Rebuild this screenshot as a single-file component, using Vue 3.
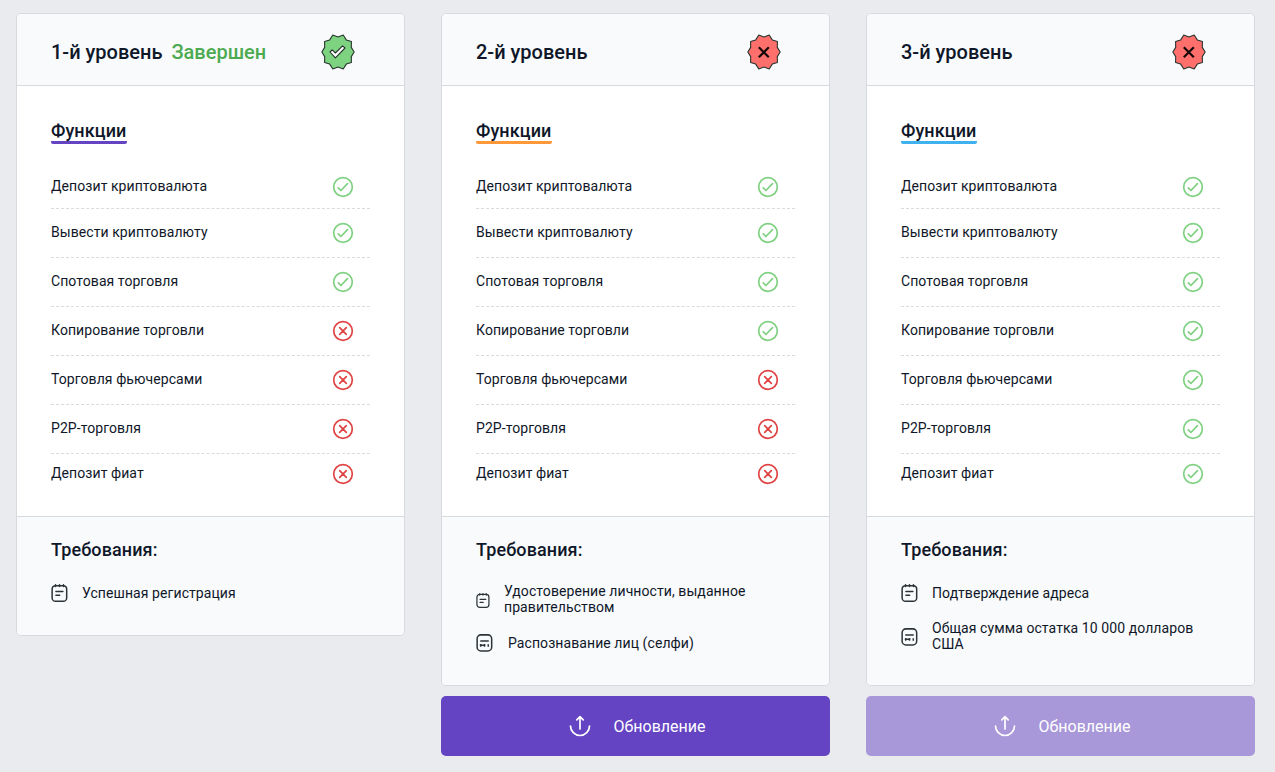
<template>
  <div class="levels">
    <div v-for="level in levels" :key="level.title" class="level">
      <div class="card">
        <div class="card-header">
          <h2 class="card-title">
            {{ level.title }}
            <span v-if="level.completed" class="card-status">Завершен</span>
          </h2>
          <svg
              class="badge"
              :class="level.completed ? 'badge-ok' : 'badge-error'"
              width="36"
              height="38"
              viewBox="-18 -19 36 38"
          >
            <path
                stroke="#26332f"
                stroke-width="1.1"
                stroke-linejoin="round"
                d="M16.2 0L13.3 4.6L13.4 10.5L8.3 12.1L5.2 17L0 15L-5.2 17L-8.3 12.1L-13.4 10.5L-13.3 4.6L-16.2 0L-13.3 -4.6L-13.4 -10.5L-8.3 -12.1L-5.2 -17L0 -15L5.2 -17L8.3 -12.1L13.4 -10.5L13.3 -4.6Z"
            />
            <path
                v-if="level.completed"
                fill="#fff"
                stroke="#26332f"
                stroke-width="1.1"
                stroke-linejoin="round"
                d="M-8 0L-5.8 -2.2L-2.6 1L4.6 -6.2L7 -4L-2.6 5.8Z"
            />
            <path
                v-else
                fill="none"
                stroke="#160808"
                stroke-width="2.2"
                d="M-5.2 -4.7L4.8 5.3M4.8 -4.7L-5.2 5.3"
            />
          </svg>
        </div>

        <div class="card-body">
          <h3 class="section-title" :class="level.accent">Функции</h3>
          <ul class="features">
            <li v-for="(feature, index) in features" :key="feature" class="feature">
              <span class="feature-name">{{ feature }}</span>
              <svg
                  :class="index < level.available ? 'icon-ok' : 'icon-error'"
                  width="22"
                  height="22"
                  viewBox="0 0 22 22"
                  fill="none"
                  stroke="currentColor"
                  stroke-width="1.7"
                  stroke-linecap="round"
                  stroke-linejoin="round"
              >
                <circle cx="11" cy="11" r="9.3"/>
                <path v-if="index < level.available" d="M6.3 11.9L8.9 14.5L15.5 7.6"/>
                <path v-else d="M7.7 7.7L14.3 14.3M14.3 7.7L7.7 14.3"/>
              </svg>
            </li>
          </ul>
        </div>

        <div class="card-footer">
          <h3 class="requirements-title">Требования:</h3>
          <ul class="requirements">
            <li
                v-for="item in level.requirements"
                :key="item.text"
                class="requirement"
                :class="item.size"
            >
              <svg
                  class="requirement-icon"
                  viewBox="0 0 18 20"
                  fill="none"
                  stroke="#2d3438"
                  stroke-width="1.6"
                  stroke-linecap="round"
                  stroke-linejoin="round"
              >
                <template v-if="item.icon === 'note'">
                  <rect x="1.2" y="2.2" width="15.4" height="16.6" rx="3.6"/>
                  <path d="M4.8 1.2V3M9 1.2V3M13.2 1.2V3"/>
                  <path d="M5.2 8.5H12.6M5.2 12.5H9.2"/>
                </template>
                <template v-else>
                  <rect x="1.2" y="1.4" width="15.4" height="17" rx="4"/>
                  <path stroke-linecap="butt" d="M4.5 8H13.5M4 12.4H10M5 11V14M9 11V14M13 11.2V14"/>
                </template>
              </svg>
              <span class="requirement-text">{{ item.text }}</span>
            </li>
          </ul>
        </div>
      </div>

      <button v-if="!level.completed" class="upgrade" :disabled="level.locked">
        <svg
            width="24"
            height="24"
            viewBox="0 0 24 24"
            fill="none"
            stroke="currentColor"
            stroke-width="1.7"
            stroke-linecap="round"
            stroke-linejoin="round"
        >
          <path d="M2.5 12A9.5 9.5 0 0 0 21.5 12"/>
          <path d="M12 15V2.8M8.8 5.8L12 2.6L15.2 5.8"/>
        </svg>
        <span>Обновление</span>
      </button>
    </div>
  </div>
</template>

<script setup>
const features = [
  'Депозит криптовалюта',
  'Вывести криптовалюту',
  'Спотовая торговля',
  'Копирование торговли',
  'Торговля фьючерсами',
  'P2P-торговля',
  'Депозит фиат'
]

// available - сколько первых функций открыто на уровне
const levels = [
  {
    title: '1-й уровень',
    completed: true,
    accent: 'accent-purple',
    available: 3,
    requirements: [
      { icon: 'note', text: 'Успешная регистрация' }
    ]
  },
  {
    title: '2-й уровень',
    completed: false,
    accent: 'accent-orange',
    available: 4,
    requirements: [
      { icon: 'note', size: 'small', text: 'Удостоверение личности, выданное правительством' },
      { icon: 'face', size: 'wide', text: 'Распознавание лиц (селфи)' }
    ]
  },
  {
    title: '3-й уровень',
    completed: false,
    locked: true,
    accent: 'accent-blue',
    available: 7,
    requirements: [
      { icon: 'note', text: 'Подтверждение адреса' },
      { icon: 'face', size: 'tall', text: 'Общая сумма остатка 10 000 долларов США' }
    ]
  }
]
</script>

<style>
body {
  background-color: #eaebef;
}
</style>

<style scoped>
.levels {
  display: grid;
  grid-template-columns: repeat(3, 389px);
  gap: 36px;
  align-items: start;
  box-sizing: border-box;
  height: 772px;
  padding: 13px 0 0 16px;
  overflow: hidden;
  background-color: #eaebef;
  font-family: Roboto, sans-serif;
  color: #0f1729;
}

h2,
h3,
ul {
  margin: 0;
  padding: 0;
  list-style: none;
}

.card {
  border: 1px solid #d6d9dd;
  border-radius: 5px;
  background-color: #fff;
  overflow: hidden;
}

.card-header {
  display: flex;
  align-items: center;
  justify-content: space-between;
  height: 71px;
  padding: 0 47px 0 34px;
  border-bottom: 1px solid #d6d9dd;
  background-color: #f9fafc;
}

.card-title {
  padding-top: 4px;
  font-size: 20px;
  font-weight: 500;
  line-height: 24px;
}

.card-status {
  margin-left: 4px;
  color: #4caa50;
}

.badge {
  margin-top: 4px;
}

.badge-ok {
  margin-right: 1px;
  fill: #7dd37f;
}

.badge-error {
  fill: #ff706c;
}

.card-body {
  height: 430px;
  padding: 0 34px;
  box-sizing: border-box;
}

.section-title {
  display: inline-block;
  margin-top: 34px;
  padding-right: 0.6px;
  font-size: 18px;
  font-weight: 500;
  line-height: 21px;
  letter-spacing: 0.1px;
  border-bottom: 3px solid;
  border-radius: 2px;
}

.accent-purple {
  border-color: #6544c4;
}

.accent-orange {
  border-color: #ff9838;
}

.accent-blue {
  border-color: #3fb1ef;
}

.features {
  margin-top: 22px;
}

.feature {
  display: flex;
  align-items: center;
  justify-content: space-between;
  height: 48px;
  padding-right: 16px;
  border-bottom: 1px dashed #d9dbdf;
  font-size: 14px;
  letter-spacing: 0.07px;
}

.feature:first-child {
  height: 42px;
}

.feature:last-child {
  height: 40px;
  border-bottom: 0;
}

.feature-name {
  padding-bottom: 2px;
}

.icon-ok {
  color: #7fd181;
}

.icon-error {
  color: #e04343;
}

.card-footer {
  padding: 22px 34px 32px;
  border-top: 1px solid #d6d9dd;
  background-color: #f9fafc;
}

.requirements-title {
  font-size: 18px;
  font-weight: 500;
  line-height: 21px;
  letter-spacing: 0.1px;
}

.requirements {
  display: grid;
  gap: 18px;
  margin-top: 23px;
}

.requirement {
  display: flex;
  align-items: center;
  gap: 14px;
  font-size: 14px;
  line-height: 16px;
  letter-spacing: 0.08px;
}

.requirement-icon {
  flex: none;
  width: 17px;
  height: 20px;
}

.requirement-text {
  max-width: 280px;
}

.small .requirement-icon {
  width: 14px;
  height: 17px;
  margin-top: 2px;
}

.wide {
  gap: 15px;
}

.tall {
  margin: -1px 0;
}

.tall .requirement-text {
  padding-bottom: 2px;
}

.upgrade {
  display: flex;
  align-items: center;
  justify-content: center;
  gap: 22px;
  width: 100%;
  height: 60px;
  margin-top: 10px;
  padding: 0 5px 0 7px;
  border: 0;
  border-radius: 5px;
  background-color: #6544c4;
  color: #fff;
  font-family: inherit;
  font-size: 16px;
}

.upgrade:disabled {
  background-color: #a897d9;
}
</style>
